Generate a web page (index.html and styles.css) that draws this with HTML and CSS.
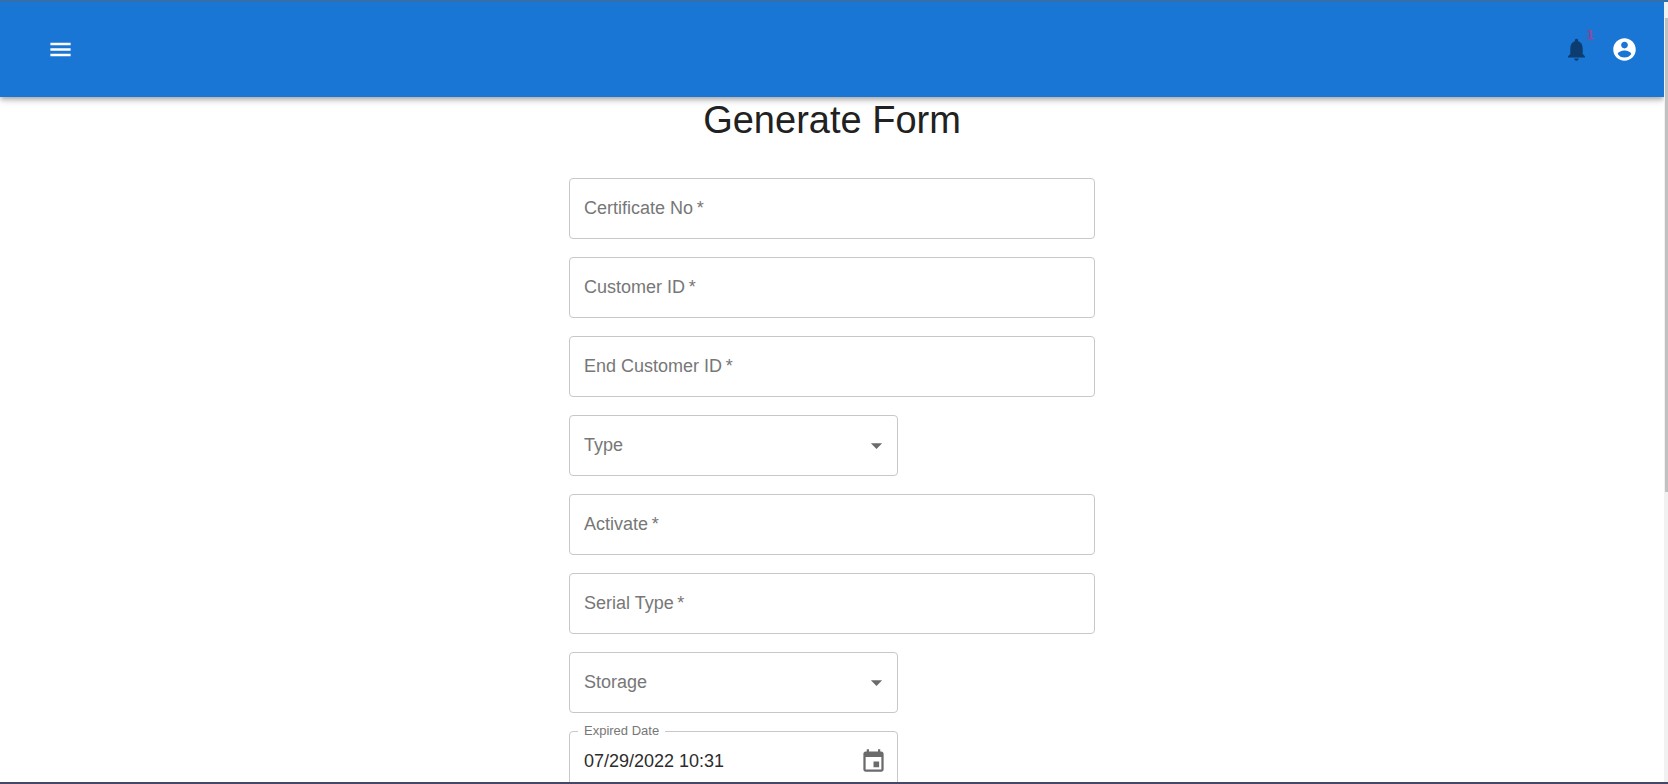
FILE: index.html
```html
<!DOCTYPE html>
<html lang="en">
<head>
<meta charset="utf-8">
<title>Generate Form</title>
<link rel="stylesheet" href="styles.css">
</head>
<body>
<div class="window">
  <div class="page">
    <header class="appbar">
      <button class="icon-btn" type="button" aria-label="Open menu">
        <svg class="icon" viewBox="0 0 24 24"><path d="M3 18h18v-2.200H3V18zm0-4.900h18v-2.200H3v2.200zM3 6v2.200h18V6H3z"/></svg>
      </button>
      <div class="actions">
        <button class="icon-btn bell" type="button" aria-label="Notifications">
          <svg class="icon" viewBox="0 0 24 24"><path d="M12 22c1.100 0 2-.9 2-2h-4c0 1.100.89 2 2 2zm5.500-6v-5c0-3.070-1.400-5.640-4-6.320V4c0-.83-.67-1.500-1.500-1.500s-1.500.67-1.500 1.500v.68C7.900 5.360 6.500 7.920 6.500 11v5l-2 2v1h15v-1l-2-2z"/></svg>
          <span class="badge">1</span>
        </button>
        <button class="icon-btn" type="button" aria-label="Account">
          <svg class="icon" viewBox="0 0 24 24"><path d="M12 2C6.480 2 2 6.480 2 12s4.480 10 10 10 10-4.480 10-10S17.520 2 12 2zm0 3c1.660 0 3 1.340 3 3s-1.340 3-3 3-3-1.340-3-3 1.340-3 3-3zm0 14.200c-2.500 0-4.710-1.280-6-3.220.03-1.990 4-3.080 6-3.080 1.990 0 5.970 1.090 6 3.080-1.290 1.940-3.500 3.220-6 3.220z"/></svg>
        </button>
      </div>
    </header>
    <main class="content">
      <h1 class="title">Generate Form</h1>
      <form class="form">
        <div class="field">
          <input class="control" id="certificate" type="text" required>
          <label class="label" for="certificate">Certificate No&#8201;*</label>
        </div>
        <div class="field">
          <input class="control" id="customer" type="text" required>
          <label class="label" for="customer">Customer ID&#8201;*</label>
        </div>
        <div class="field">
          <input class="control" id="end-customer" type="text" required>
          <label class="label" for="end-customer">End Customer ID&#8201;*</label>
        </div>
        <div class="field field-short">
          <select class="control" id="type"><option value=""></option></select>
          <label class="label" for="type">Type</label>
          <svg class="icon adornment arrow" viewBox="0 0 24 24"><path d="M7 10l5 5 5-5z"/></svg>
        </div>
        <div class="field">
          <input class="control" id="activate" type="text" required>
          <label class="label" for="activate">Activate&#8201;*</label>
        </div>
        <div class="field">
          <input class="control" id="serial" type="text" required>
          <label class="label" for="serial">Serial Type&#8201;*</label>
        </div>
        <div class="field field-short">
          <select class="control" id="storage"><option value=""></option></select>
          <label class="label" for="storage">Storage</label>
          <svg class="icon adornment arrow" viewBox="0 0 24 24"><path d="M7 10l5 5 5-5z"/></svg>
        </div>
        <div class="field field-short">
          <input class="control" id="expired" type="text" value="07/29/2022 10:31">
          <label class="label label-raised" for="expired">Expired Date</label>
          <button class="icon-btn adornment calendar" type="button" aria-label="Choose date">
            <svg class="icon" viewBox="0 0 24 24"><path d="M17 12h-5v5h5v-5zM16 1v2H8V1H6v2H5c-1.110 0-1.990.9-1.990 2L3 19c0 1.100.89 2 2 2h14c1.100 0 2-.9 2-2V5c0-1.100-.9-2-2-2h-1V1h-2zm3 18H5V8h14v11z"/></svg>
          </button>
        </div>
      </form>
    </main>
  </div>
  <div class="scrollbar"><div class="thumb"></div></div>
</div>
</body>
</html>
```
FILE: styles.css
```css
* {
  box-sizing: border-box;
}

body {
  margin: 0;
  font-family: "Liberation Sans", Arial, sans-serif;
  font-size: 18px;
  color: #212121;
  background: #fff;
}

.window {
  display: flex;
  height: 100vh;
  overflow: hidden;
  border-top: 2px solid #336fab;
  border-bottom: 2px solid #434865;
}

.page {
  flex: 1;
  min-width: 0;
  overflow: hidden;
}

.appbar {
  position: relative;
  display: flex;
  align-items: center;
  justify-content: space-between;
  height: 95px;
  padding: 0 26px 0 47px;
  color: #fff;
  background: #1976d5;
  box-shadow: 0 2px 4px -1px rgba(0, 0, 0, 0.2), 0 4px 5px rgba(0, 0, 0, 0.14), 0 1px 10px rgba(0, 0, 0, 0.12);
}

.actions {
  display: flex;
  gap: 21px;
}

.icon-btn {
  display: flex;
  padding: 0;
  border: 0;
  color: inherit;
  background: none;
  cursor: pointer;
}

.icon {
  width: 27px;
  height: 27px;
  fill: currentColor;
}

.bell {
  position: relative;
  color: #0d3c70;
}

.badge {
  position: absolute;
  top: -9px;
  right: -6px;
  width: 12px;
  font-family: inherit;
  font-size: 12px;
  line-height: 16px;
  text-align: center;
  color: #b23a78;
  background: radial-gradient(rgba(120, 80, 170, 0.4), transparent 70%);
}

.title {
  margin: 0 0 35px;
  font-size: 38px;
  font-weight: 400;
  line-height: 46px;
  text-align: center;
}

.form {
  display: flex;
  flex-direction: column;
  gap: 18px;
  width: 100%;
  max-width: 526px;
  margin: 0 auto;
}

.field {
  position: relative;
}

.field-short {
  width: 62.5%;
}

.control {
  display: block;
  width: 100%;
  height: 61px;
  padding: 0 14px;
  border: 1px solid #c8c8c8;
  border-radius: 4px;
  font: inherit;
  color: #2c2c2c;
  background: #fff;
  appearance: none;
}

.label {
  position: absolute;
  top: 20px;
  left: 15px;
  line-height: 20px;
  color: #777;
  pointer-events: none;
}

.label-raised {
  top: -8px;
  left: 9px;
  padding: 0 6px;
  font-size: 13px;
  line-height: 16px;
  background: #fff;
}

.adornment {
  position: absolute;
  top: 17px;
  color: #6b6b6b;
}

.arrow {
  right: 8px;
  pointer-events: none;
}

.calendar {
  right: 11px;
}

.scrollbar {
  width: 4px;
  padding-top: 16px;
  background: #f1f1f1;
}

.thumb {
  height: 62%;
  margin-left: 1px;
  background: #c1c1c1;
}
```
